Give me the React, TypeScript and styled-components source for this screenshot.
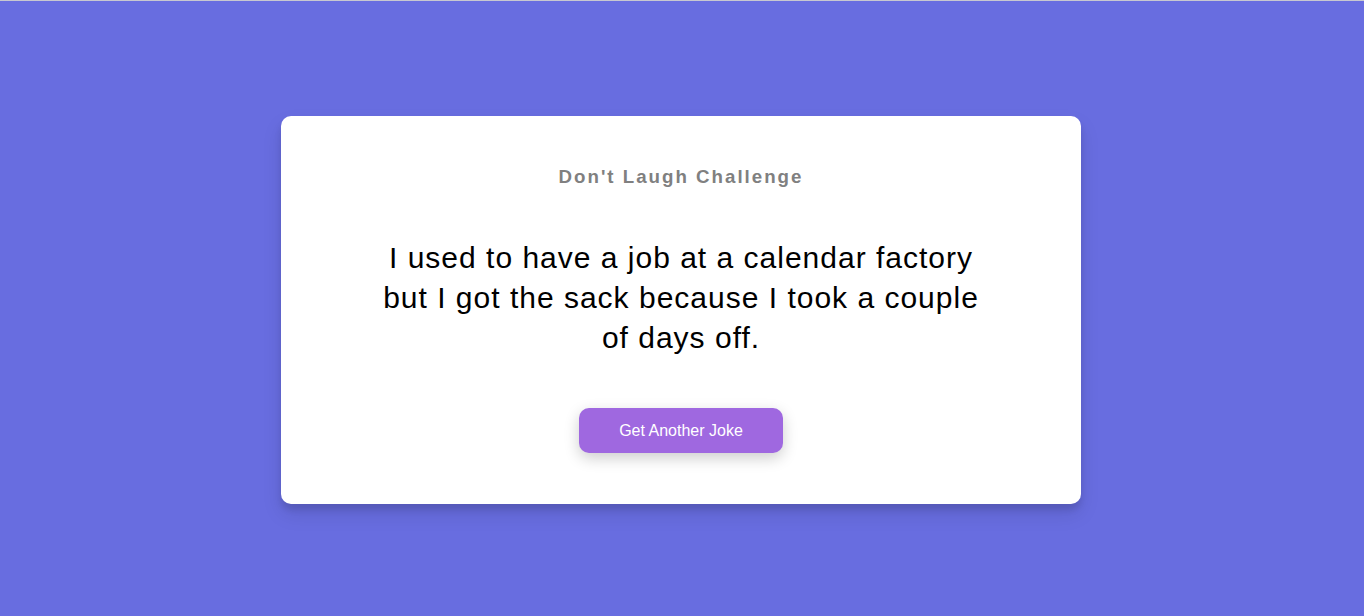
import React from "react";
import styled, { createGlobalStyle } from "styled-components";

const Global = createGlobalStyle`
  * { box-sizing: border-box; }
  html, body { margin: 0; padding: 0; }
  body {
    background: #686de0;
    font-family: "Liberation Sans", Arial, sans-serif;
    border-top: 1px solid #c8c8d0;
  }
`;

const Page = styled.div`
  min-height: 615px;
  display: flex;
  align-items: center;
  justify-content: center;
  padding: 3px 2px 0 0;
`;

const Card = styled.div`
  width: 800px;
  background: #ffffff;
  border-radius: 10px;
  box-shadow: 0 10px 20px rgba(0, 0, 0, 0.1), 0 6px 6px rgba(0, 0, 0, 0.1);
  padding: 50px 20px 51px;
  text-align: center;
  display: flex;
  flex-direction: column;
  align-items: center;
`;

const Title = styled.h3`
  margin: 0;
  font-size: 18.72px;
  line-height: 22px;
  font-weight: 700;
  letter-spacing: 2px;
  color: #808080;
`;

const Joke = styled.div`
  margin: 50px 0 50px;
  max-width: 600px;
  font-size: 30px;
  line-height: 40px;
  letter-spacing: 1px;
  color: #000;
`;

const Button = styled.button`
  background: #9f68e0;
  color: #fff;
  border: 0;
  border-radius: 10px;
  padding: 14px 40px;
  font-family: "Liberation Sans", Arial, sans-serif;
  font-size: 16px;
  line-height: 17px;
  box-shadow: 0 5px 15px rgba(0, 0, 0, 0.2);
  cursor: pointer;
`;

export default function App() {
  return (
    <>
      <Global />
      <Page>
        <Card>
          <Title>Don't Laugh Challenge</Title>
          <Joke>
            I used to have a job at a calendar factory but I got the sack because I took a couple of days off.
          </Joke>
          <Button>Get Another Joke</Button>
        </Card>
      </Page>
    </>
  );
}
